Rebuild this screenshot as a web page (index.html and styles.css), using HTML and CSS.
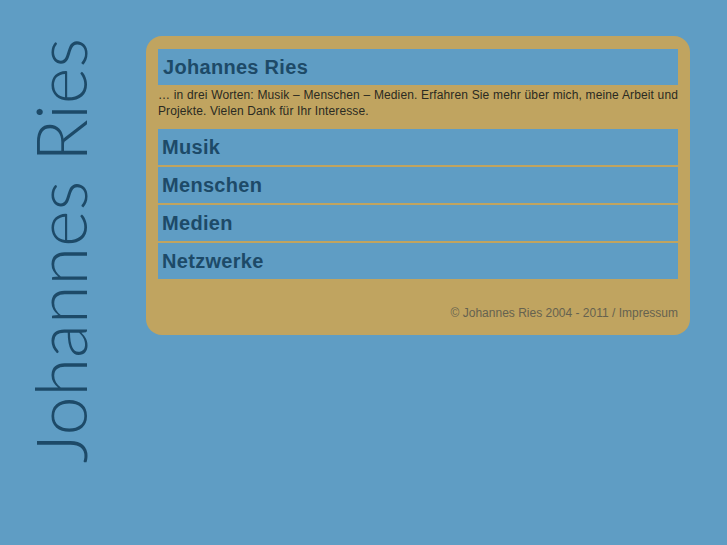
FILE: index.html
```html
<!DOCTYPE html>
<html lang="de">
<head>
<meta charset="utf-8">
<title>Johannes Ries</title>
<link rel="stylesheet" href="styles.css">
</head>
<body>
<div class="page">
  <aside class="side">
    <div class="side-title">Johannes Ries</div>
  </aside>
  <main class="card">
    <h1 class="head">Johannes Ries</h1>
    <p class="intro">… in drei Worten: Musik – Menschen – Medien. Erfahren Sie mehr über mich, meine Arbeit und Projekte. Vielen Dank für Ihr Interesse.</p>
    <nav class="nav">
      <a class="nav-item" href="#">Musik</a>
      <a class="nav-item" href="#">Menschen</a>
      <a class="nav-item" href="#">Medien</a>
      <a class="nav-item" href="#">Netzwerke</a>
    </nav>
    <footer class="foot">© Johannes Ries 2004 - 2011 / Impressum</footer>
  </main>
</div>
</body>
</html>
```

FILE: styles.css
```css
html, body {
  margin: 0;
  padding: 0;
  background: #5f9dc4;
  height: 100%;
}
body {
  font-family: "Liberation Sans", Arial, sans-serif;
}
.page {
  display: flex;
  align-items: flex-start;
}
.side {
  width: 146px;
  display: flex;
  padding-top: 38px;
  padding-left: 25px;
  box-sizing: border-box;
}
.side-title {
  writing-mode: vertical-rl;
  transform: rotate(180deg);
  font-family: "Lato", "Open Sans", sans-serif;
  font-weight: 300;
  font-size: 70px;
  line-height: 1;
  color: #1d4a68;
  white-space: nowrap;
}
.card {
  margin-top: 36px;
  width: 544px;
  height: 299px;
  box-sizing: border-box;
  background: #c0a460;
  border-radius: 16px;
  padding: 13px 12px 0 12px;
  display: flex;
  flex-direction: column;
}
.head {
  margin: 0;
  height: 36px;
  background: #5f9dc4;
  color: #1d4a68;
  font-size: 20px;
  font-weight: bold;
  letter-spacing: 0.3px;
  line-height: 36px;
  padding-left: 5px;
}
.intro {
  margin: 2px 0 0 0;
  font-size: 12px;
  letter-spacing: 0.12px;
  line-height: 16px;
  color: #2a2a22;
  text-align: justify;
  height: 42px;
}
.nav {
  display: flex;
  flex-direction: column;
  gap: 2px;
}
.nav-item {
  display: block;
  height: 36px;
  background: #5f9dc4;
  color: #1d4a68;
  font-size: 20px;
  font-weight: bold;
  letter-spacing: 0.3px;
  line-height: 36px;
  padding-left: 4px;
  text-decoration: none;
}
.foot {
  margin-top: 27px;
  text-align: right;
  font-size: 12px;
  color: #66624f;
  line-height: 14px;
}
```
